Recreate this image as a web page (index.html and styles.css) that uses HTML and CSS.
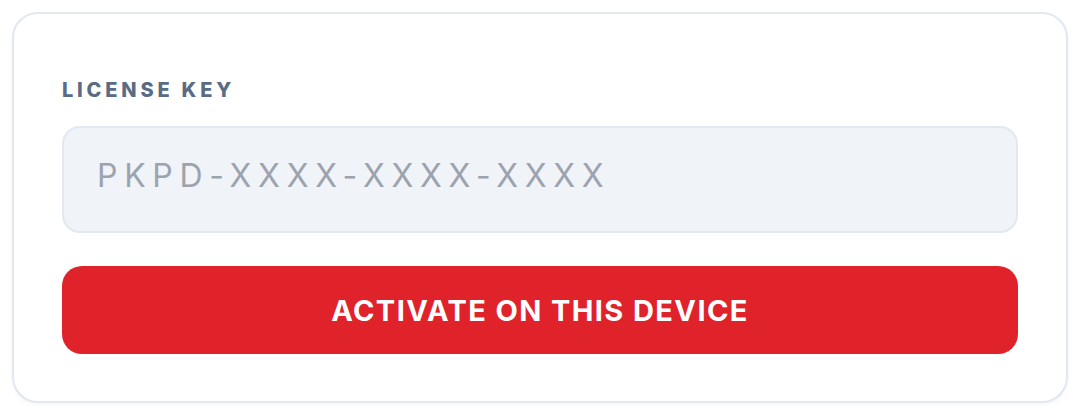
FILE: index.html
```html
<!DOCTYPE html>
<html lang="en">
<head>
<meta charset="utf-8">
<title>License activation</title>
<link rel="stylesheet" href="styles.css">
</head>
<body>
  <main class="card">
    <label class="label" for="key">License key</label>
    <div class="field" id="key"><span class="placeholder">PKPD-XXXX-XXXX-XXXX</span></div>
    <button class="activate" type="button">Activate on this device</button>
  </main>
</body>
</html>
```

FILE: styles.css
```css
* { box-sizing: border-box; }
html, body { margin: 0; background: #ffffff; }
body {
  padding: 12px;
  font-family: Inter, "Liberation Sans", Arial, sans-serif;
}
.card {
  display: flex;
  flex-direction: column;
  width: 1056px;
  padding: 64px 48px 47px;
  border: 2px solid #e2e8f0;
  border-radius: 26px;
  background: #ffffff;
  box-shadow: 0 2px 4px rgba(15, 23, 42, 0.04);
}
.label {
  display: block;
  font-size: 20px;
  line-height: 24px;
  font-weight: 800;
  letter-spacing: 3.8px;
  text-transform: uppercase;
  color: #5a6b85;
  margin-bottom: 24px;
}
.field {
  display: flex;
  align-items: center;
  height: 107px;
  padding: 0 32px 8px 33px;
  border: 2px solid #e2e8f0;
  border-radius: 18px;
  background: #f0f4f9;
}
.placeholder {
  font-size: 32px;
  font-weight: 400;
  letter-spacing: 6.7px;
  color: #9ca3af;
}
.activate {
  margin-top: 33px;
  height: 88px;
  border: 0;
  border-radius: 20px;
  background: #e0222a;
  color: #ffffff;
  font-family: inherit;
  font-size: 29px;
  font-weight: 700;
  letter-spacing: 1.4px;
  text-transform: uppercase;
  cursor: pointer;
}
```
